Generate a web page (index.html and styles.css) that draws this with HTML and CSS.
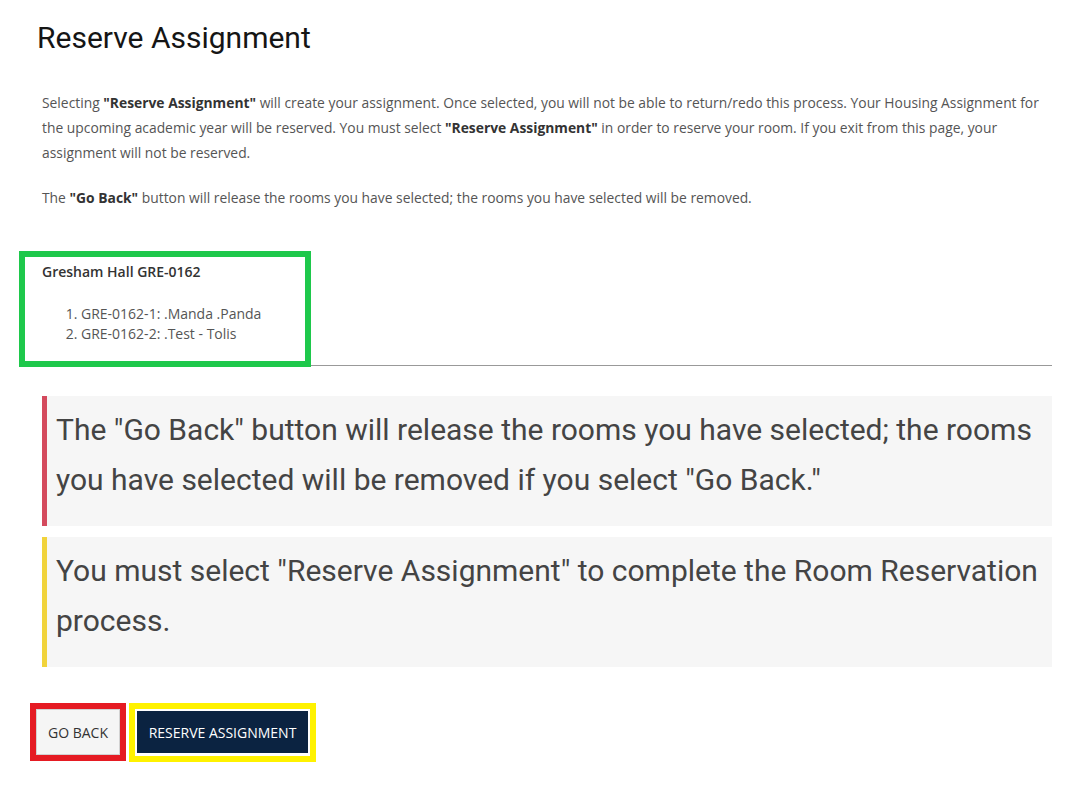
FILE: index.html
```html
<!DOCTYPE html>
<html lang="en">
<head>
<meta charset="utf-8">
<title>Reserve Assignment</title>
<link rel="stylesheet" href="styles.css">
</head>
<body>
<main class="page">
  <h1 class="title">Reserve Assignment</h1>
  <p class="intro">Selecting <strong>"Reserve Assignment"</strong> will create your assignment. Once selected, you will not be able to return/redo this process. Your Housing Assignment for the upcoming academic year will be reserved. You must select <strong>"Reserve Assignment"</strong> in order to reserve your room. If you exit from this page, your assignment will not be reserved.</p>
  <p class="intro">The <strong>"Go Back"</strong> button will release the rooms you have selected; the rooms you have selected will be removed.</p>

  <section class="room mark-green">
    <h2 class="room-name">Gresham Hall GRE-0162</h2>
    <ol class="beds">
      <li>GRE-0162-1: .Manda .Panda</li>
      <li>GRE-0162-2: .Test - Tolis</li>
    </ol>
  </section>
  <hr class="rule">

  <div class="callout callout-red">The "Go Back" button will release the rooms you have selected; the rooms you have selected will be removed if you select "Go Back."</div>
  <div class="callout callout-yellow">You must select "Reserve Assignment" to complete the Room Reservation process.</div>

  <div class="actions">
    <div class="mark-red"><button class="btn btn-light" type="button">Go Back</button></div>
    <div class="mark-yellow"><button class="btn btn-dark" type="button">Reserve Assignment</button></div>
  </div>
</main>
</body>
</html>
```

FILE: styles.css
```css
* { box-sizing: border-box; }
html, body { margin: 0; padding: 0; background: #fff; }

.page {
  width: 1052px;
  padding: 20px 0 0 42px;
  font-family: "Open Sans", "Liberation Sans", sans-serif;
}

.title {
  font-family: Roboto, "Liberation Sans", sans-serif;
  font-weight: 400;
  font-size: 30px;
  line-height: 36px;
  color: #151515;
  margin: 0 0 0 -5px;
}

.intro {
  font-size: 13.85px;
  line-height: 25px;
  color: #555;
  margin: 34px 0 0;
}
.intro + .intro { margin-top: 20px; }
.intro strong { color: #333; font-weight: 700; }

.mark-green {
  position: relative;
  z-index: 1;
  width: 292px;
  margin: 41px 0 -2px -23px;
  border: 6px solid #1ec84b;
  background: #fff;
  padding: 5px 0 17px 17px;
}
.room-name {
  margin: 0;
  font-size: 14px;
  line-height: 20px;
  font-weight: 600;
  color: #333;
}
.beds {
  margin: 22px 0 0;
  padding-left: 39px;
  font-size: 14px;
  line-height: 20px;
  color: #555;
}

.rule {
  margin: 0;
  border: 0;
  border-top: 1px solid #999;
  height: 0;
}

.callout {
  margin-top: 30px;
  background: #f6f6f6;
  border-left: 5px solid #d44a5d;
  padding: 9px 14px 21px 9px;
  font-family: Roboto, "Liberation Sans", sans-serif;
  font-size: 30px;
  line-height: 50px;
  color: #444;
}
.callout-yellow {
  margin-top: 11px;
  border-left-color: #f1d33b;
}

.actions {
  display: flex;
  align-items: flex-start;
  gap: 3px;
  margin: 36px 0 0 -12px;
}
.mark-red { border: 6px solid #e51b23; }
.mark-yellow { border: 6px solid #fff200; padding: 2px 2px 3px; }

.btn {
  font-family: "Open Sans", "Liberation Sans", sans-serif;
  font-size: 14px;
  text-transform: uppercase;
  cursor: pointer;
  display: block;
  margin: 0;
}
.btn-light {
  width: 84px;
  height: 46px;
  background: #f5f5f5;
  border: 1px solid #d2d2d2;
  color: #333;
  padding: 0;
}
.btn-dark {
  width: 171px;
  height: 42px;
  background: #0b2341;
  border: 0;
  color: #fff;
  padding: 0;
}
```
